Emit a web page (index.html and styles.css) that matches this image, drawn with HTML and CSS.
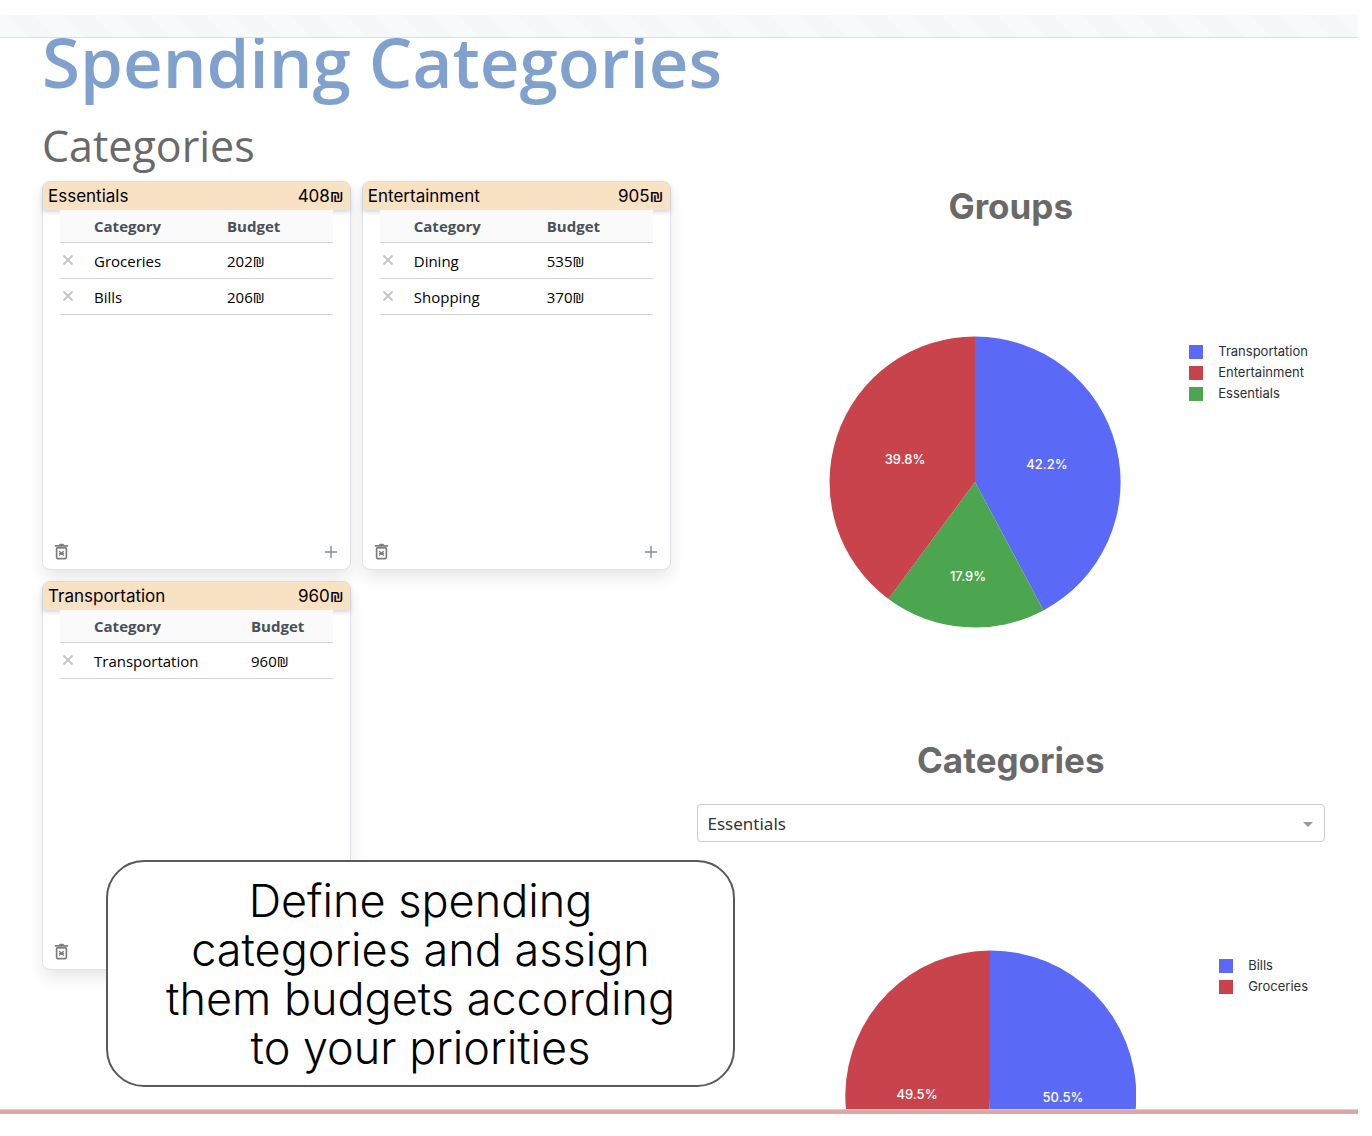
FILE: index.html
```html
<!DOCTYPE html>
<html lang="en">
<head>
<meta charset="utf-8">
<title>Spending Categories</title>
<link rel="stylesheet" href="styles.css">
</head>
<body>
<svg class="sprite" aria-hidden="true">
  <symbol id="trash" viewBox="0 0 16 18">
    <path d="M1 2h4l1-1.200h4L11 2h4v1.800H1z" fill="currentColor"/>
    <rect x="2.800" y="5.200" width="10.400" height="11.300" rx="1" fill="none" stroke="currentColor" stroke-width="1.800"/>
    <path d="M5.600 8.600l4.800 4.600M10.400 8.600l-4.800 4.600M5.300 10.900h5.400" stroke="currentColor" stroke-width="1.400"/>
  </symbol>
  <symbol id="plus" viewBox="0 0 14 14"><path d="M7 1v12M1 7h12" stroke="currentColor" stroke-width="1.500"/></symbol>
  <symbol id="cross" viewBox="0 0 12 12"><path d="M1.500 1.500l9 9M10.500 1.500l-9 9" stroke="currentColor" stroke-width="1.800"/></symbol>
</svg>
<div class="shell">
  <div class="stripes"></div>
  <main class="page">
    <h1>Spending Categories</h1>
    <h2>Categories</h2>
    <div class="columns">
      <section class="groups">
        <article class="card">
          <header class="card-head"><span>Essentials</span><span>408₪</span></header>
          <table>
            <colgroup><col class="col-remove"><col class="col-name"><col></colgroup>
            <thead><tr><th></th><th>Category</th><th>Budget</th></tr></thead>
            <tbody>
              <tr><td><button class="remove" aria-label="Remove Groceries"><svg><use href="#cross"/></svg></button></td><td>Groceries</td><td>202₪</td></tr>
              <tr><td><button class="remove" aria-label="Remove Bills"><svg><use href="#cross"/></svg></button></td><td>Bills</td><td>206₪</td></tr>
            </tbody>
          </table>
          <footer class="card-foot"><button class="delete" aria-label="Delete group"><svg><use href="#trash"/></svg></button><button class="add" aria-label="Add category"><svg><use href="#plus"/></svg></button></footer>
        </article>
        <article class="card">
          <header class="card-head"><span>Entertainment</span><span>905₪</span></header>
          <table>
            <colgroup><col class="col-remove"><col class="col-name"><col></colgroup>
            <thead><tr><th></th><th>Category</th><th>Budget</th></tr></thead>
            <tbody>
              <tr><td><button class="remove" aria-label="Remove Dining"><svg><use href="#cross"/></svg></button></td><td>Dining</td><td>535₪</td></tr>
              <tr><td><button class="remove" aria-label="Remove Shopping"><svg><use href="#cross"/></svg></button></td><td>Shopping</td><td>370₪</td></tr>
            </tbody>
          </table>
          <footer class="card-foot"><button class="delete" aria-label="Delete group"><svg><use href="#trash"/></svg></button><button class="add" aria-label="Add category"><svg><use href="#plus"/></svg></button></footer>
        </article>
        <article class="card">
          <header class="card-head"><span>Transportation</span><span>960₪</span></header>
          <table>
            <colgroup><col class="col-remove"><col class="col-name-wide"><col></colgroup>
            <thead><tr><th></th><th>Category</th><th>Budget</th></tr></thead>
            <tbody>
              <tr><td><button class="remove" aria-label="Remove Transportation"><svg><use href="#cross"/></svg></button></td><td>Transportation</td><td>960₪</td></tr>
            </tbody>
          </table>
          <footer class="card-foot"><button class="delete" aria-label="Delete group"><svg><use href="#trash"/></svg></button><button class="add" aria-label="Add category"><svg><use href="#plus"/></svg></button></footer>
        </article>
      </section>
      <section class="charts">
        <h3>Groups</h3>
        <div class="chart">
          <div class="plot">
            <svg class="pie" viewBox="-146 -146 292 292" role="img" aria-label="Groups budget share">
              <path class="blue" d="M0 0V-145.500A145.500 145.500 0 0 1 68.500 128.400Z"/>
              <path class="green" d="M0 0L68.500 128.400A145.500 145.500 0 0 1 -86.600 116.900Z"/>
              <path class="red" d="M0 0L-86.600 116.900A145.500 145.500 0 0 1 0 -145.500Z"/>
              <text x="72" y="-13">42.2%</text>
              <text x="-70" y="-18">39.8%</text>
              <text x="-7" y="99">17.9%</text>
            </svg>
          </div>
          <ul class="legend">
            <li class="blue">Transportation</li>
            <li class="red">Entertainment</li>
            <li class="green">Essentials</li>
          </ul>
        </div>
        <h3><label for="group">Categories</label></h3>
        <div class="picker">
          <select id="group"><option>Essentials</option><option>Entertainment</option><option>Transportation</option></select>
        </div>
        <div class="chart">
          <div class="plot">
            <svg class="pie" viewBox="-146 -146 292 292" role="img" aria-label="Categories budget share">
              <path class="blue" d="M0 0V-145.500A145.500 145.500 0 1 1 -4.500 145.400Z"/>
              <path class="red" d="M0 0L-4.500 145.400A145.500 145.500 0 0 1 0 -145.500Z"/>
              <text x="73" y="6">50.5%</text>
              <text x="-73" y="3">49.5%</text>
            </svg>
          </div>
          <ul class="legend">
            <li class="blue">Bills</li>
            <li class="red">Groceries</li>
          </ul>
        </div>
      </section>
    </div>
  </main>
  <div class="baseline"></div>
  <p class="callout">Define spending<br>categories and assign<br>them budgets according<br>to your priorities</p>
</div>
</body>
</html>
```
FILE: styles.css
```css
* { box-sizing: border-box; }
body {
  margin: 0;
  background: #fff;
  color: #000;
  font-family: "Open Sans", "Noto Sans", sans-serif;
}
h1, h2, h3, p, ul { margin: 0; padding: 0; }
button { padding: 0; border: 0; background: none; display: flex; }
.sprite { display: none; }

.shell {
  position: relative;
  display: flex;
  flex-direction: column;
  height: 100vh;
  padding: 15px 14px 22px 0;
}
.stripes {
  flex: none;
  height: 23px;
  border-bottom: 1px solid #dcdfe1;
  background: repeating-linear-gradient(45deg, #f7fafb 0 20px, #f4f8f9 20px 40px);
}
.baseline {
  flex: none;
  height: 5px;
  border-top: 1px solid #d9cfcf;
  background: #dba9a5;
}
.page {
  flex: 1;
  min-height: 0;
  overflow: hidden;
  padding: 0 33px 0 42px;
}
h1 {
  font-size: 69px;
  font-weight: 600;
  line-height: 46px;
  color: #80a1cd;
}
h2 {
  margin-top: 32px;
  font-size: 43px;
  font-weight: 400;
  line-height: 60px;
  color: #696969;
}
.columns {
  display: grid;
  grid-template-columns: 1fr 1fr;
  gap: 26px;
  margin-top: 5px;
}

.groups {
  display: grid;
  grid-template-columns: 1fr 1fr;
  gap: 11px;
  align-content: start;
}
.card {
  display: flex;
  flex-direction: column;
  min-height: 389px;
  border: 1px solid #dee2e6;
  border-radius: 8px;
  background: #fff;
  box-shadow: 0 8px 16px rgba(0, 0, 0, .09);
}
.card-head {
  display: flex;
  justify-content: space-between;
  padding: 0 6px 0 5px;
  border-radius: 7px 7px 0 0;
  background: #f9e1c3;
  box-shadow: 0 2px 4px rgba(60, 90, 140, .25);
  font-family: Inter, sans-serif;
  font-size: 17px;
  line-height: 28px;
}
table {
  position: relative;
  margin: 0 17px;
  border-collapse: collapse;
  table-layout: fixed;
  font-size: 15px;
  line-height: 20px;
}
.col-remove { width: 26px; }
.col-name { width: 133px; }
.col-name-wide { width: 157px; }
th, td {
  height: 36px;
  padding: 2px 8px 0;
  border-bottom: 1px solid #d3d5d7;
  text-align: left;
}
th {
  height: 32px;
  padding-top: 0;
  background: #fafafa;
  color: #495057;
  font-weight: 700;
}
td:first-child { padding: 0 2px; }
.remove { color: #c4c4c4; }
.remove svg { width: 12px; height: 12px; }
.card-foot {
  display: flex;
  justify-content: space-between;
  align-items: center;
  margin-top: auto;
  padding: 0 12px 9px 11px;
}
.delete { color: #7d7d7d; }
.delete svg { width: 15px; height: 17px; }
.add { color: #868e96; }
.add svg { width: 14px; height: 14px; }

.charts, .pie text { font-family: Inter, sans-serif; }
h3 {
  font-size: 35px;
  font-weight: 700;
  line-height: 50px;
  text-align: center;
  color: #696969;
}
.chart {
  display: flex;
  align-items: flex-start;
  gap: 16px;
  padding: 105px 17px 107px 80px;
}
.plot {
  flex: 1;
  display: flex;
  justify-content: center;
}
.pie { width: 292px; height: 292px; }
.pie text {
  fill: #fff;
  font-size: 13px;
  font-weight: 500;
  text-anchor: middle;
}
.blue { fill: #5b69f7; --swatch: #5b69f7; }
.red { fill: #c8434b; --swatch: #c8434b; }
.green { fill: #4ba64f; --swatch: #4ba64f; }
.legend {
  margin-top: 5px;
  list-style: none;
  font-size: 13px;
  line-height: 21px;
  color: #2a2f35;
}
.legend li {
  display: flex;
  align-items: center;
  gap: 15px;
}
.legend li::before {
  content: "";
  width: 14px;
  height: 14px;
  background: var(--swatch);
}
.picker {
  position: relative;
  display: flex;
  margin: 19px 0 3px;
}
.picker::after {
  content: "";
  position: absolute;
  right: 12px;
  top: 18px;
  border: 5px solid transparent;
  border-top-color: #999;
}
select {
  flex: 1;
  height: 38px;
  padding: 0 10px;
  border: 1px solid #ccc;
  border-radius: 4px;
  background: #fff;
  appearance: none;
  color: #333;
  font: 17px "Noto Sans", sans-serif;
}
.callout {
  position: absolute;
  left: 106px;
  bottom: 49px;
  width: 629px;
  padding: 14px 0 13px;
  border: 2px solid #595959;
  border-radius: 38px;
  background: #fff;
  font-family: Inter, sans-serif;
  font-size: 45px;
  font-weight: 300;
  line-height: 49px;
  text-align: center;
}
```
